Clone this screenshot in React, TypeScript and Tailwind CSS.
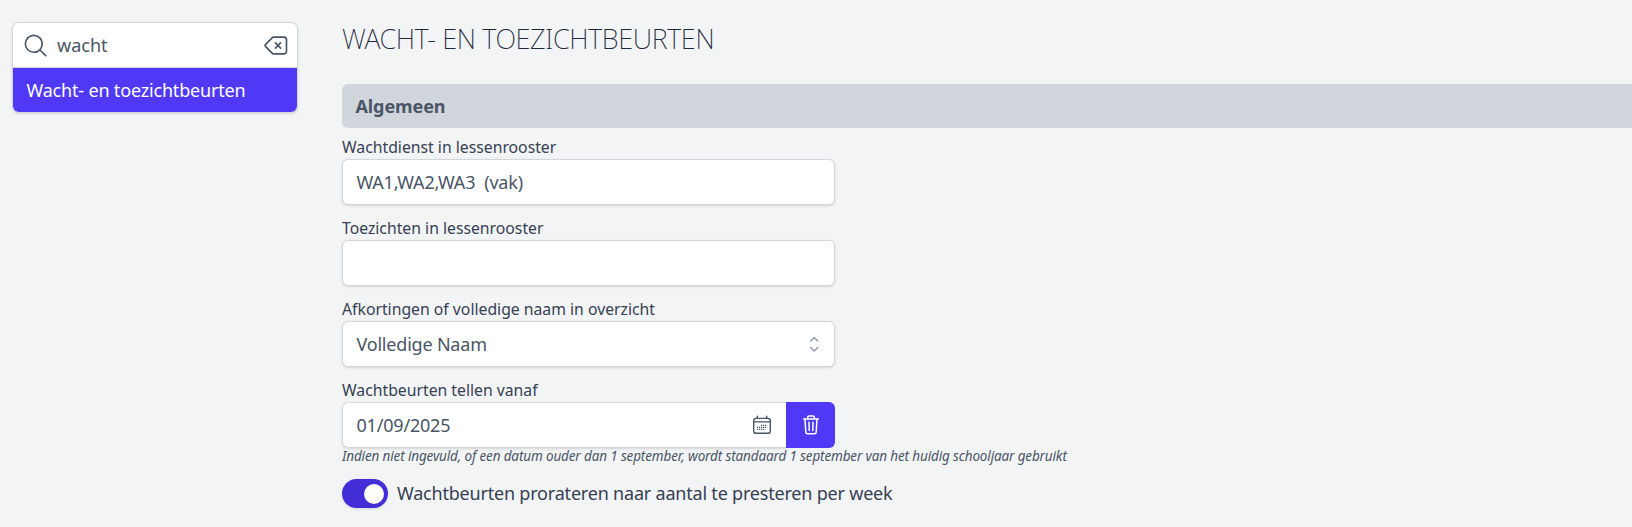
import React from "react";

const fieldBox =
  "flex h-[46px] items-center rounded-md border border-[#d1d5dc] bg-white px-[13.5px] text-[18px] leading-[27px] tracking-[-0.2px] text-[#4a5565] shadow-sm";

function SearchIcon() {
  return (
    <svg className="size-[27px] shrink-0" viewBox="0 0 24 24" fill="none" stroke="currentColor" strokeWidth="1.5" strokeLinecap="round" strokeLinejoin="round">
      <path d="m21 21-5.197-5.197m0 0A7.5 7.5 0 1 0 5.196 5.196a7.5 7.5 0 0 0 10.607 10.607Z" />
    </svg>
  );
}

function BackspaceIcon() {
  return (
    <svg className="size-[27px] shrink-0" viewBox="0 0 24 24" fill="none" stroke="currentColor" strokeWidth="1.5" strokeLinecap="round" strokeLinejoin="round">
      <path d="M12 9.75 14.25 12m0 0 2.25 2.25M14.25 12l2.25-2.25M14.25 12 12 14.25m-2.58 4.92-6.374-6.375a1.125 1.125 0 0 1 0-1.59L9.42 4.83c.211-.211.498-.33.796-.33H19.5a2.25 2.25 0 0 1 2.25 2.25v10.5a2.25 2.25 0 0 1-2.25 2.25h-9.284c-.298 0-.585-.119-.796-.33Z" />
    </svg>
  );
}

function CalendarIcon() {
  return (
    <svg className="mr-[0.5px] h-5 w-5 shrink-0" viewBox="0 0 20 20" fill="none" stroke="currentColor" strokeWidth="1.4" strokeLinecap="round">
      <rect x="1.7" y="3.4" width="16.6" height="14.9" rx="2.4" />
      <path d="M1.7 6.9h16.6M5.3 1.3v2M14.7 1.3v2" />
      <path d="M9 10.4h6.2M5 12.4h10.2M5 14.4h8" strokeWidth="1.2" strokeDasharray="1.2 0.8" strokeLinecap="butt" />
    </svg>
  );
}

function TrashIcon() {
  return (
    <svg className="h-5 w-5 shrink-0" viewBox="0 0 20 20" fill="none" stroke="currentColor" strokeWidth="1.5" strokeLinecap="round" strokeLinejoin="round">
      <path d="M2.6 4.1h14.8M6.6 4V2.6c0-.9.6-1.5 1.5-1.5h3.8c.9 0 1.5.6 1.5 1.5V4M4 4.3l.8 12.8c.1 1 .8 1.7 1.8 1.7h6.8c1 0 1.7-.7 1.8-1.7L16 4.3M8 7.2l.2 8.4M12 7.2l-.2 8.4" />
    </svg>
  );
}

function Field({ label, children }: { label: string; children: React.ReactNode }) {
  return (
    <div className="mb-[12px]">
      <div className="h-[23px] text-[15.75px] leading-[23px] text-[#364153]">{label}</div>
      {children}
    </div>
  );
}

export default function App() {
  return (
    <div className="flex h-[527px] overflow-hidden bg-[#f3f4f6] font-['Noto_Sans',sans-serif] text-[18px]">
      <aside className="ml-[12px] mt-[22px] w-[286px] shrink-0">
        <div className="overflow-hidden rounded-[7px] border border-[#d1d5dc] bg-white shadow-sm">
          <div className="flex h-[45px] items-center border-b border-[#d1d5dc] pl-[9px] pr-[8px] text-[#4a5565]">
            <SearchIcon />
            <span className="ml-[8px] flex-1 leading-[27px]">wacht</span>
            <BackspaceIcon />
          </div>
          <div className="flex h-[44px] items-center bg-[#4f39f6] px-[13.5px] leading-[27px] tracking-[-0.18px] text-white">
            Wacht- en toezichtbeurten
          </div>
        </div>
      </aside>
      <main className="ml-[44px] flex-1">
        <h1 className="mt-[21px] h-[63px] text-[27px] font-extralight leading-[36px] tracking-[-0.33px] text-[#1e2939]">
          WACHT- EN TOEZICHTBEURTEN
        </h1>
        <h2 className="mb-[8px] flex h-[44px] items-center rounded-l-md bg-[#d1d5dc] px-[13.5px] font-bold leading-[27px] tracking-[-0.1px] text-[#4a5565]">
          Algemeen
        </h2>
        <div className="w-[493px]">
          <Field label="Wachtdienst in lessenrooster">
            <div className={`${fieldBox} whitespace-pre`}>{"WA1,WA2,WA3  (vak)"}</div>
          </Field>
          <Field label="Toezichten in lessenrooster">
            <div className={fieldBox} />
          </Field>
          <Field label="Afkortingen of volledige naam in overzicht">
            <div className={`${fieldBox} justify-between !pr-[9px]`}>
              <span>Volledige Naam</span>
              <svg className="size-[22.5px] text-[#99a1af]" viewBox="0 0 20 20" fill="none" stroke="currentColor" strokeWidth="1.5" strokeLinecap="round" strokeLinejoin="round">
                <path d="m7 7 3-3 3 3m0 6-3 3-3-3" />
              </svg>
            </div>
          </Field>
          <div className="h-[23px] text-[15.75px] leading-[23px] text-[#364153]">Wachtbeurten tellen vanaf</div>
          <div className="flex">
            <div className={`${fieldBox} flex-1 justify-between rounded-r-none border-r-0`}>
              <span>01/09/2025</span>
              <CalendarIcon />
            </div>
            <button className="flex h-[46px] w-[49px] items-center justify-center rounded-r-md bg-[#4f39f6] text-white">
              <TrashIcon />
            </button>
          </div>
        </div>
        <p className="text-[13.5px] italic leading-[16px] tracking-[-0.14px] text-[#4a5565]">
          Indien niet ingevuld, of een datum ouder dan 1 september, wordt standaard 1 september van het huidig schooljaar gebruikt
        </p>
        <div className="mt-[15px] flex items-center">
          <div className="flex h-[29px] w-[46px] items-center justify-end rounded-full bg-[#432dd7] pr-[4px] shadow-sm">
            <div className="size-[20px] rounded-full bg-white" />
          </div>
          <span className="ml-[9px] leading-[27px] tracking-[-0.2px] text-[#364153]">
            Wachtbeurten prorateren naar aantal te presteren per week
          </span>
        </div>
      </main>
    </div>
  );
}
